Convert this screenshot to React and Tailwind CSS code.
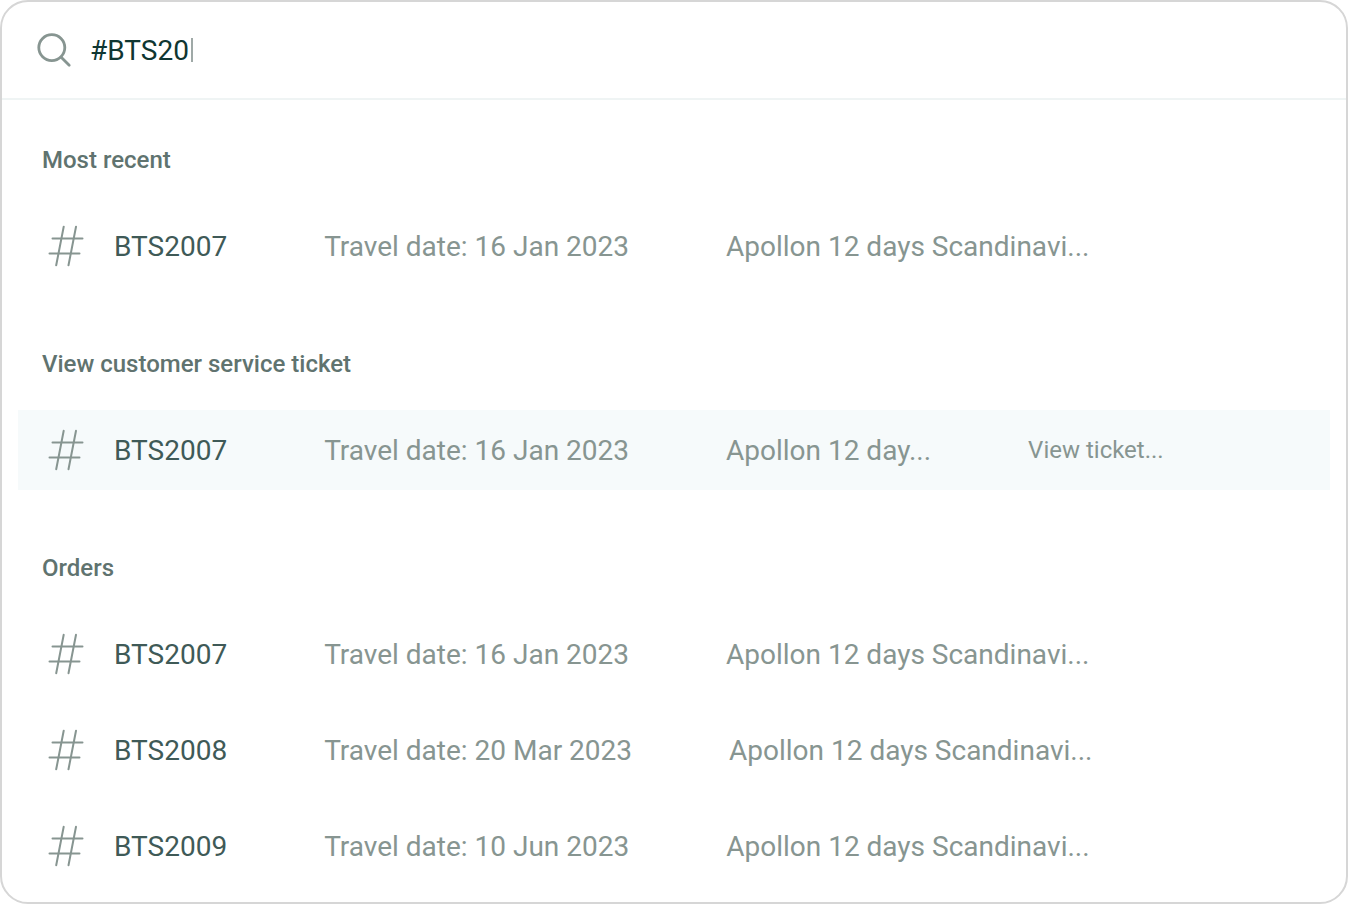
const sections = [
  {
    title: "Most recent",
    rows: [{ id: "BTS2007", date: "16 Jan 2023", trip: "Apollon 12 days Scandinavi..." }],
  },
  {
    title: "View customer service ticket",
    rows: [
      { id: "BTS2007", date: "16 Jan 2023", trip: "Apollon 12 day...", action: "View ticket...", active: true },
    ],
  },
  {
    title: "Orders",
    rows: [
      { id: "BTS2007", date: "16 Jan 2023", trip: "Apollon 12 days Scandinavi..." },
      { id: "BTS2008", date: "20 Mar 2023", trip: "Apollon 12 days Scandinavi..." },
      { id: "BTS2009", date: "10 Jun 2023", trip: "Apollon 12 days Scandinavi..." },
    ],
  },
];

function SearchIcon() {
  return (
    <svg className="size-10 shrink-0" viewBox="0 0 40 40" fill="none" stroke="#879591" strokeWidth="2.8" strokeLinecap="round" aria-hidden="true">
      <circle cx="17.8" cy="17.6" r="13" />
      <path d="M27.2 27.2L35.2 35.2" />
    </svg>
  );
}

function HashIcon() {
  return (
    <svg className="size-12 shrink-0" viewBox="0 0 48 48" fill="none" stroke="#879591" strokeWidth="2" strokeLinecap="round" aria-hidden="true">
      <path d="M10.5 16.5H40.5M7.5 31.5H37.5M21.7 4.7L14.2 43.3M34 4.7L26.5 43.3" />
    </svg>
  );
}

function ResultRow({ row }) {
  return (
    <li>
      <a
        href={"#" + row.id}
        className={"flex h-20 items-center gap-6 px-6 " + (row.active ? "bg-[#f6fafb]" : "")}
      >
        <HashIcon />
        <span className="flex items-center gap-[97px] whitespace-nowrap text-[28px] leading-[33px] text-[#879591]">
          <span className="text-[#3f5a57]">{row.id}</span>
          <span>Travel date: {row.date}</span>
          <span>{row.trip}</span>
          {row.action && <span className="text-2xl leading-8">{row.action}</span>}
        </span>
      </a>
    </li>
  );
}

export default function App() {
  return (
    <main className="overflow-hidden rounded-[28px] border-2 border-[#d6d6d6] bg-white font-['Roboto',sans-serif]">
      <div role="search" className="flex items-center gap-4 border-b-2 border-[#eff4f4] px-8 py-7">
        <SearchIcon />
        <div className="flex items-center gap-0.5">
          <input
            type="text"
            aria-label="Search orders"
            defaultValue="#BTS20"
            className="h-[33px] field-sizing-content bg-transparent text-[28px] leading-[33px] text-[#0f3632] caret-transparent outline-none"
          />
          <span className="h-6 w-0.5 bg-[#9fa9a7]" aria-hidden="true" />
        </div>
      </div>
      <div className="flex flex-col gap-16 px-4 pt-[46px] pb-4">
        {sections.map((section) => (
          <section key={section.title}>
            <h2 className="mb-8 px-6 text-2xl leading-7 font-medium text-[#60736f]">{section.title}</h2>
            <ul className="flex flex-col gap-4">
              {section.rows.map((row) => (
                <ResultRow key={row.id} row={row} />
              ))}
            </ul>
          </section>
        ))}
      </div>
    </main>
  );
}
